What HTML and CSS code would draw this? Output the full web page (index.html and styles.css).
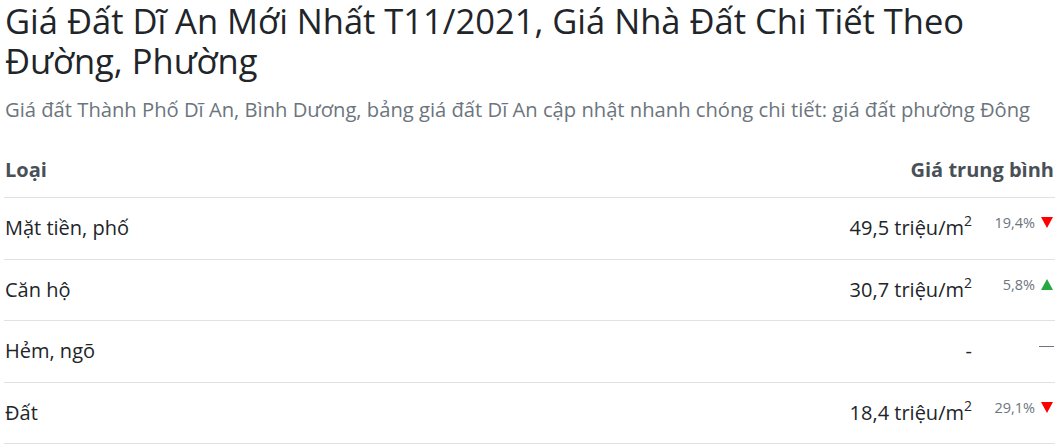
FILE: index.html
```html
<!DOCTYPE html>
<html lang="vi">
<head>
<meta charset="utf-8">
<link rel="stylesheet" href="styles.css">
</head>
<body>
<div class="page">
  <h1 class="title">Giá Đất Dĩ An Mới Nhất T11/2021, Giá Nhà Đất Chi Tiết Theo Đường, Phường</h1>
  <p class="lead">Giá đất Thành Phố Dĩ An, Bình Dương, bảng giá đất Dĩ An cập nhật nhanh chóng chi tiết: giá đất phường Đông</p>
  <table class="prices">
    <thead>
      <tr>
        <th class="c-type">Loại</th>
        <th class="c-price" colspan="2">Giá trung bình</th>
      </tr>
    </thead>
    <tbody>
      <tr>
        <td class="c-type">Mặt tiền, phố</td>
        <td class="c-price">49,5 triệu/m<sup>2</sup></td>
        <td class="c-chg"><span class="pct">19,4%</span><span class="tri down"></span></td>
      </tr>
      <tr>
        <td class="c-type">Căn hộ</td>
        <td class="c-price">30,7 triệu/m<sup>2</sup></td>
        <td class="c-chg"><span class="pct">5,8%</span><span class="tri up"></span></td>
      </tr>
      <tr>
        <td class="c-type">Hẻm, ngõ</td>
        <td class="c-price">-</td>
        <td class="c-chg"><span class="dash"></span></td>
      </tr>
      <tr>
        <td class="c-type">Đất</td>
        <td class="c-price">18,4 triệu/m<sup>2</sup></td>
        <td class="c-chg"><span class="pct">29,1%</span><span class="tri down"></span></td>
      </tr>
    </tbody>
  </table>
</div>
</body>
</html>
```

FILE: styles.css
```css
html, body {
  margin: 0;
  padding: 0;
  background: #ffffff;
}
body {
  font-family: "Open Sans", "Noto Sans", sans-serif;
  color: #212529;
}
.page {
  padding: 0 5px 0 4px;
}
.title {
  margin: 0;
  padding: 1px 0 0 1px;
  font-size: 34.5px;
  line-height: 40px;
  font-weight: 400;
  color: #212529;
}
.lead {
  margin: 13px 0 0 1px;
  font-size: 20.2px;
  line-height: 30px;
  color: #6c757d;
}
.prices {
  width: 100%;
  border-collapse: collapse;
  margin-top: 31px;
  font-size: 20px;
}
.prices th {
  font-weight: 700;
  color: #495057;
  text-align: left;
  padding: 0 1px 12px;
  border-bottom: 1px solid #dee2e6;
  line-height: 30px;
}
.prices th.c-price {
  text-align: right;
}
.prices tbody tr {
  height: 61.5px;
}
.prices td {
  padding: 0 1px;
  border-bottom: 1px solid #dee2e6;
  vertical-align: middle;
  line-height: 30px;
}
.prices td.c-price {
  text-align: right;
}
.prices sup {
  font-size: 14px;
  line-height: 0;
  vertical-align: 9px;
}
.prices td.c-chg {
  width: 80px;
  text-align: right;
  vertical-align: top;
  padding-top: 16px;
  white-space: nowrap;
  font-size: 14.5px;
  line-height: 18px;
}
.pct {
  color: #6c757d;
}
.tri {
  display: inline-block;
  width: 0;
  height: 0;
  margin-left: 6px;
  margin-right: 1px;
  border-left: 6px solid transparent;
  border-right: 6px solid transparent;
  vertical-align: 0;
}
.tri.down {
  border-top: 11px solid #ff0000;
}
.tri.up {
  border-bottom: 11px solid #28a745;
}
.dash {
  display: inline-block;
  width: 15px;
  height: 1px;
  background: #6c757d;
  vertical-align: 4px;
}
```
